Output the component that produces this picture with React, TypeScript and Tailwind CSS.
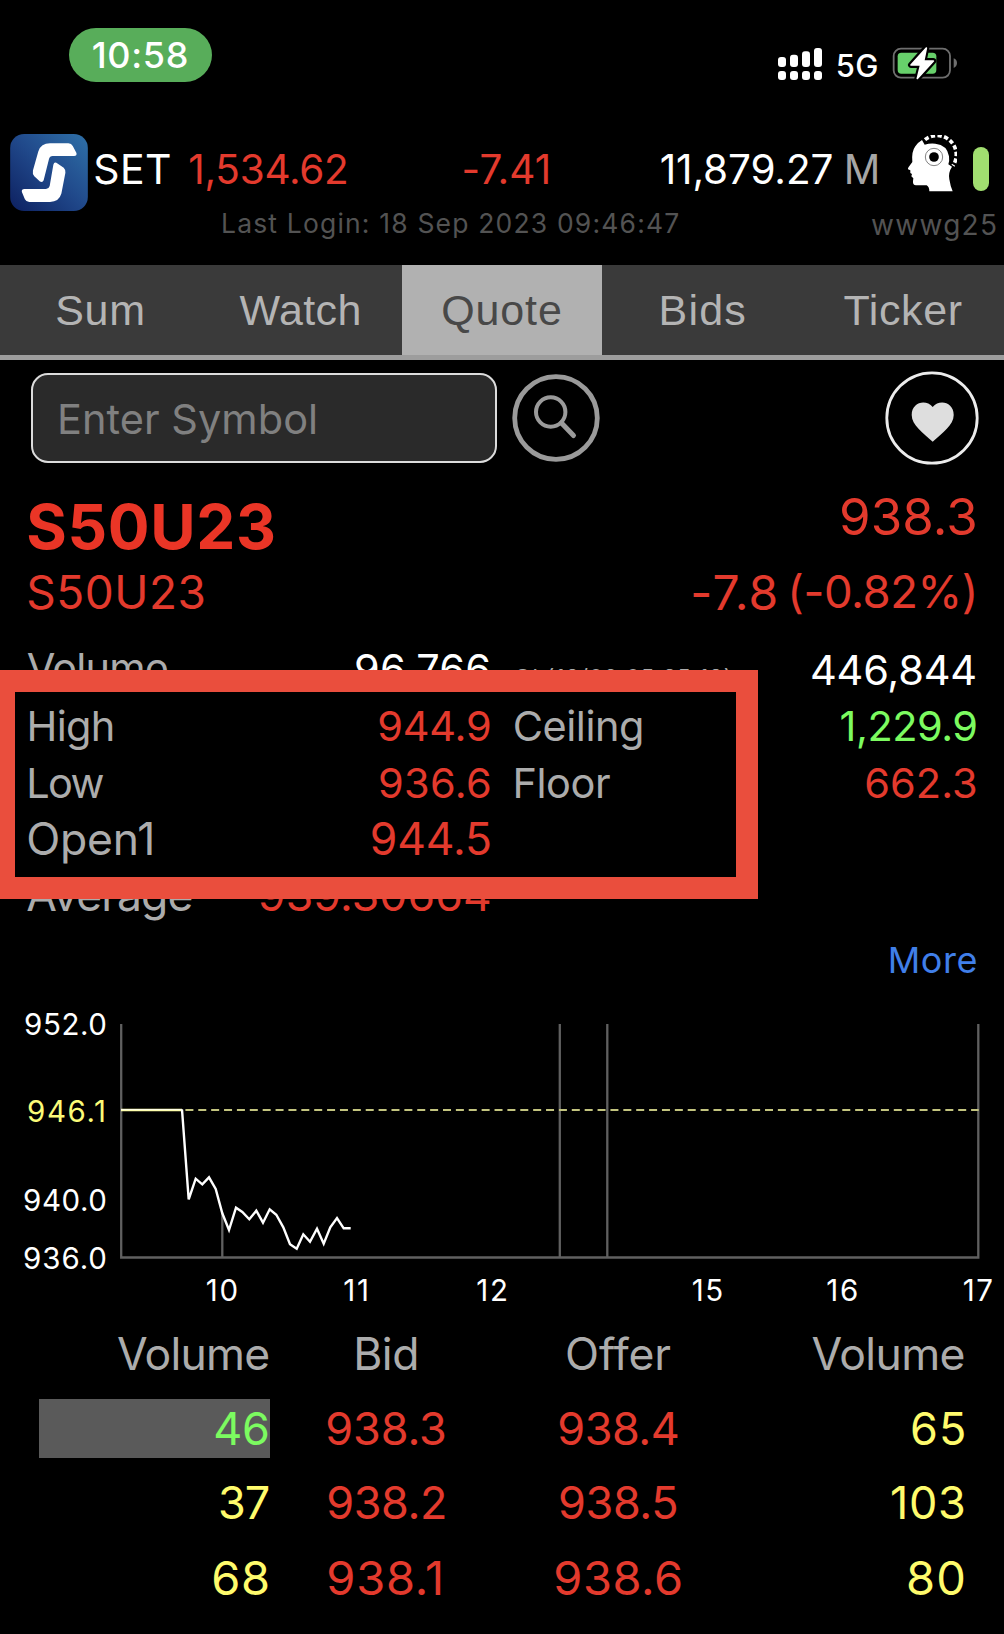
import React from "react";

const RED = "text-[#e33a2d]";
const GRAY = "text-[#acacac]";
const GREEN = "text-[#7cfb60]";
const YELLOW = "text-[#fffb6c]";

function T({ c, children }: { c: string; children: React.ReactNode }) {
  return <span className={`block shrink-0 whitespace-pre leading-none ${c}`}>{children}</span>;
}

function Signal() {
  return (
    <svg className="h-8 w-11" viewBox="829 144 132 96" fill="#fff">
      <rect x="829" y="171" width="24" height="30" rx="9" />
      <rect x="865" y="164" width="24" height="37" rx="9" />
      <rect x="901" y="154" width="24" height="47" rx="9" />
      <rect x="937" y="144" width="24" height="57" rx="9" />
      {[829, 865, 901, 937].map((x) => (
        <rect key={x} x={x} y="213" width="24" height="27" rx="9" />
      ))}
    </svg>
  );
}

function Battery() {
  return (
    <svg className="h-[34px] w-[66px]" viewBox="1170 139 198 102">
      <rect x="1175" y="147" width="169" height="87" rx="22" fill="none" stroke="#6e6e6e" strokeWidth="5.5" />
      <path d="M1355 176 Q1365 180 1365 190 T1355 205Z" fill="#6e6e6e" />
      <rect x="1187" y="159" width="116" height="63" rx="11" fill="#67d06b" />
      <path
        d="M1273 144 L1227 196 H1256 L1246 237 L1294 184 H1265Z"
        fill="#fff"
        stroke="#000"
        strokeWidth="18"
        strokeLinejoin="round"
        paintOrder="stroke"
      />
      <path d="M1273 145 L1227 196 H1256 L1246 236 L1294 184 H1265Z" fill="#fff" stroke="#fff" strokeWidth="5" strokeLinejoin="round" />
    </svg>
  );
}

function Logo() {
  return (
    <svg className="block h-[77px] w-[78px]" viewBox="31 402 232 230">
      <defs>
        <linearGradient id="logo" x1="0" y1="1" x2="1" y2="0">
          <stop offset="0" stopColor="#0d2060" />
          <stop offset="0.5" stopColor="#20488a" />
          <stop offset="1" stopColor="#2f71a8" />
        </linearGradient>
      </defs>
      <rect x="31" y="402" width="232" height="230" rx="42" fill="url(#logo)" />
      <g fill="#fff">
        <path d="M150 430H205Q214 430 218 438L229 459Q231 468 222 468H158Q149 468 147 477L131 540Q128 548 120 544L103 528Q97 521 99 511L115 454Q123 430 150 430Z" />
        <path d="M169 488L191 503Q197 509 196 518L184 580Q177 605 150 605H88Q79 605 75 597L66 575Q64 566 74 566H138Q147 565 149 557L160 494Q162 485 169 488Z" />
      </g>
    </svg>
  );
}

function HeadIcon() {
  return (
    <svg className="block h-[57px] w-[50px]" viewBox="1215 402 150 171">
      <path
        d="M1282 571Q1282 558 1274 553H1242Q1232 553 1233 541L1234 532L1228 526L1230 519L1225 516V508L1218 505Q1217 502 1220 498L1231 483Q1228 452 1240 436Q1248 424 1260 417L1268 431Q1284 426 1300 428Q1336 432 1341 466Q1343 482 1339 490L1350 497Q1338 515 1342 535Q1345 555 1352 571Z"
        fill="#fff"
      />
      <circle cx="1296" cy="468" r="26" fill="none" stroke="#6a6a6a" strokeWidth="2.5" />
      <circle cx="1296" cy="468" r="14.5" fill="#000" />
      <path d="M1269 416A58 58 0 0 1 1353 494" fill="none" stroke="#fff" strokeWidth="11" strokeDasharray="13 7" />
    </svg>
  );
}

const TABS = [
  { label: "Sum", c: "tracking-[0.7px]" },
  { label: "Watch", c: "tracking-[0.41px] ml-[-1px]" },
  { label: "Quote", c: "tracking-[0.87px]", active: true },
  { label: "Bids", c: "tracking-[1.18px]" },
  { label: "Ticker", c: "tracking-[0.63px] ml-[-1px]" },
];

const PRICE =
  "182,1109.5 188.7,1199.3 195.7,1178.7 202.3,1184.3 209,1177.3 215.7,1189 222.3,1213.3 229,1230 236,1207.7 242.3,1212 249.3,1219.3 256.3,1210.7 263,1222.7 269.7,1209.3 276.3,1214.7 283.3,1227.3 290,1244.3 296.7,1248.7 303.3,1234.3 310,1241.7 317,1228.7 323.7,1243.7 330.3,1227.3 337,1218 343.7,1228.3 350.7,1228.3";

const Y_LABELS = [
  { y: 1035, t: "952.0", c: "tracking-[0.6px]", x: 24, f: "#fff" },
  { y: 1121.5, t: "946.1", c: "tracking-[1.6px]", x: 27, f: "#fbfb78" },
  { y: 1210.5, t: "940.0", c: "tracking-[0.6px]", x: 23, f: "#fff" },
  { y: 1268.7, t: "936.0", c: "tracking-[0.95px]", x: 23, f: "#fff" },
];

const X_LABELS = [
  { x: 205.8, t: "10" },
  { x: 343.3, t: "11" },
  { x: 476.3, t: "12" },
  { x: 691.7, t: "15" },
  { x: 826.3, t: "16" },
  { x: 962.7, t: "17" },
];

function Chart() {
  return (
    <svg className="block h-[316px] w-[1004px]" viewBox="0 1000 1004 316">
      <g stroke="#606060" strokeWidth="2.3" fill="none">
        <path d="M121.2 1024V1257.5H978.3V1024" />
        <path d="M559.8 1024V1257M607.3 1024V1257M222.3 1213V1257" />
      </g>
      <path d="M121 1110H978.7" stroke="#c3c47f" strokeWidth="2" strokeDasharray="8 4.88" />
      <path d="M121 1110H182" stroke="#ffff9c" strokeWidth="2.6" />
      <path d="M121 1109.6H182.5" stroke="#ffffe6" strokeWidth="1.4" />
      <polyline points={PRICE} fill="none" stroke="#fff" strokeWidth="2.4" strokeLinejoin="miter" />
      <g fontSize="29.5">
        {Y_LABELS.map((l) => (
          <text key={l.t} x={l.x} y={l.y} fill={l.f} className={l.c}>
            {l.t}
          </text>
        ))}
        {X_LABELS.map((l) => (
          <text key={l.t} x={l.x} y="1300.7" fill="#fff" className="tracking-[1.6px]">
            {l.t}
          </text>
        ))}
      </g>
    </svg>
  );
}

const STATS = [
  {
    label: "Volume", lc: "text-[41.5px] tracking-[-0.87px] ml-[26.7px] mt-[-1px]",
    value: "96,766", vc: "text-white text-[41.5px] tracking-[0.26px] mr-[-0.3px]",
    label2: "OI (18/09 05:35:18)", l2c: "text-[22px] tracking-[1.05px] ml-[23.3px] mt-3.5",
    value2: "446,844", v2c: "text-white text-[41.5px] tracking-[-0.19px] mr-[27.1px] mt-[2px]",
  },
  {
    label: "High", lc: "text-[41.5px] tracking-[-0.68px] ml-[26.5px] mt-[2px]",
    value: "944.9", vc: `${RED} text-[41.5px] tracking-[-0.23px] mr-[-0.5px] mt-[2px]`,
    label2: "Ceiling", l2c: "text-[41.5px] tracking-[-0.48px] ml-[21.7px] mt-[2px]",
    value2: "1,229.9", v2c: `${GREEN} text-[41.5px] tracking-[-0.52px] mr-[26.5px] mt-[2px]`,
  },
  {
    label: "Low", lc: "text-[41.5px] tracking-[-1.7px] ml-[26.3px] mt-[2px]",
    value: "936.6", vc: `${RED} text-[41.5px] tracking-[0.35px] mr-[-1.1px] mt-[2px]`,
    label2: "Floor", l2c: "text-[41.5px] tracking-[-0.48px] ml-[21.5px] mt-[2px]",
    value2: "662.3", v2c: `${RED} text-[41.5px] tracking-[0.02px] mr-[26.3px] mt-[2px]`,
  },
  {
    label: "Open1", lc: "text-[44.5px] tracking-[-0.19px] ml-[26.2px]",
    value: "944.5", vc: `${RED} text-[44.5px] tracking-[-0.12px] mr-[-0.9px]`,
    label2: "", l2c: "", value2: "", v2c: "",
  },
  {
    label: "Average", lc: "text-[44.5px] tracking-[-0.92px] ml-[26.2px]",
    value: "939.30664", vc: `${RED} text-[44.5px] tracking-[0.13px] mr-[-0.9px]`,
    label2: "", l2c: "", value2: "", v2c: "",
  },
];

const BOOK = [
  {
    v: "46", vc: `${GREEN} tracking-[-0.37px] mr-[0.5px]`, hot: true,
    b: "938.3", bc: "tracking-[-0.15px] ml-[55.3px]",
    o: "938.4", oc: "tracking-[-0.52px] ml-[57.3px]",
    w: "65", wc: "tracking-[1.09px] mr-[36.5px]", size: "text-[45px]",
  },
  {
    v: "37", vc: `${YELLOW} tracking-[-1.1px] mr-[0.9px]`,
    b: "938.2", bc: "tracking-[-0.45px] ml-[56.3px]",
    o: "938.5", oc: "tracking-[-0.39px] ml-[58px]",
    w: "103", wc: "tracking-[0.7px] mr-[37.4px]", size: "text-[45px]",
  },
  {
    v: "68", vc: `${YELLOW} tracking-[0.55px] mr-[-0.6px]`,
    b: "938.1", bc: "tracking-[0.8px] ml-[56.2px]",
    o: "938.6", oc: "tracking-[0.54px] ml-[53.3px]",
    w: "80", wc: "tracking-[1.22px] mr-[36.8px]", size: "text-[47px]",
  },
];

export default function App() {
  return (
    <div className="flex h-[1634px] w-[1004px] flex-col overflow-hidden bg-black font-['Inter',sans-serif]">
      {/* Status bar */}
      <div className="flex h-[131px] shrink-0 items-start">
        <div className="ml-[69px] mt-7 flex h-[54px] w-[143px] items-center rounded-full bg-[#58ad5a]">
          <T c="ml-[22.7px] text-[36px] font-medium tracking-[0.66px] text-white">10:58</T>
        </div>
        <div className="ml-[566.3px] mt-12 flex h-8 items-center">
          <Signal />
          <T c="ml-[13.5px] mt-[2px] text-[31px] font-medium tracking-[0.4px] text-white">5G</T>
          <div className="ml-[12.8px] mt-[-2px]">
            <Battery />
          </div>
        </div>
      </div>

      {/* Index summary */}
      <div className="flex h-[76px] shrink-0 items-center">
        <div className="ml-[10.3px] mt-[6px] h-[77px]">
          <Logo />
        </div>
        <T c="ml-[5px] text-[41px] tracking-[0.38px] text-white">SET</T>
        <T c={`ml-[16.5px] mt-[2px] text-[40.5px] tracking-[-0.29px] ${RED}`}>1,534.62</T>
        <T c={`ml-[113px] mt-[2px] text-[40.5px] tracking-[0.17px] ${RED}`}>-7.41</T>
        <T c="ml-[108.3px] mt-[2px] text-[40.5px] tracking-[-0.13px] text-white">11,879.27</T>
        <T c="ml-[10.4px] mt-[2px] text-[40.5px] text-[#a6a6a6]">M</T>
        <div className="ml-[26.5px] mt-[-12px]">
          <HeadIcon />
        </div>
        <div className="ml-[16px] h-11 w-4 rounded-full bg-[#a1de70]" />
      </div>
      <div className="flex h-[58px] shrink-0 items-start justify-between pl-[221px] pr-[5.7px] pt-[3px] text-[#535353]">
        <T c="text-[26.5px] tracking-[1.17px]">Last Login: 18 Sep 2023 09:46:47</T>
        <T c="mt-px text-[28px] tracking-[1.3px]">wwwg25</T>
      </div>

      {/* Tabs */}
      <div className="grid h-[95px] shrink-0 grid-cols-5 border-b-[5px] border-[#9d9d9d] bg-[#3a3a3a] font-['Liberation_Sans',sans-serif] text-[43px]">
        {TABS.map((t) => (
          <div
            key={t.label}
            className={`flex items-center justify-center ${t.active ? "bg-[#b1b1b1] text-[#484848]" : "text-[#b4b4b4]"}`}
          >
            <T c={t.c}>{t.label}</T>
          </div>
        ))}
      </div>

      {/* Search */}
      <div className="flex h-[116px] shrink-0 items-center">
        <div className="ml-[31px] flex h-[90px] w-[466px] items-center rounded-[17px] border-2 border-[#dcdcdc] bg-[#2a2a2a]">
          <T c="ml-6 mt-1 text-[41.5px] tracking-[0.03px] text-[#808080]">Enter Symbol</T>
        </div>
        <svg className="ml-[15px] mt-[-1px] h-[88px] w-[88px]" viewBox="0 0 88 88" fill="none" stroke="#9a9a9a">
          <circle cx="44" cy="44" r="41.3" strokeWidth="4.8" />
          <circle cx="38.7" cy="38" r="14.7" strokeWidth="4" />
          <path d="M49.5 49L61.5 61.5" strokeWidth="5" strokeLinecap="round" />
        </svg>
        <svg className="ml-[285px] mt-[-1px] h-[94px] w-[94px]" viewBox="0 0 94 94">
          <circle cx="47" cy="47" r="45.2" fill="none" stroke="#ececec" strokeWidth="2.8" />
          <path
            d="M47.7 70.7C38 62 26.7 54 26.7 44C26.7 31 41 28 47.7 36C54.4 28 68.7 31 68.7 44C68.7 54 57.4 62 47.7 70.7Z"
            fill="#dedede"
          />
        </svg>
      </div>

      {/* Symbol and last price */}
      <div className="flex h-[165.5px] shrink-0 justify-between pl-[26.3px] pr-[26.2px]">
        <div>
          <T c="mt-[20px] text-[62px] font-bold tracking-[0.65px] text-[#ea3526]">S50U23</T>
          <T c={`mt-[11px] text-[46px] tracking-[0.5px] ${RED}`}>S50U23</T>
        </div>
        <div className="flex flex-col items-end">
          <T c={`mt-[15px] text-[51px] tracking-[0.11px] ${RED}`}>938.3</T>
          <div className={`mt-[27px] flex items-center ${RED}`}>
            <T c="text-[48px] tracking-[1.1px]">-7.8</T>
            <T c="ml-[8px] mt-[-2px] text-[45.5px] tracking-[-0.48px]">(-0.82%)</T>
          </div>
        </div>
      </div>

      {/* Statistics, with the highlighted block outlined on top */}
      <div className="relative h-[282px] shrink-0">
        {STATS.map((s) => (
          <div key={s.label} className="flex h-[56.4px] items-center">
            <div className="flex w-[491px] items-center justify-between">
              <T c={`${s.lc} ${GRAY}`}>{s.label}</T>
              <T c={s.vc}>{s.value}</T>
            </div>
            <div className="flex w-[513px] items-center justify-between">
              <T c={`${s.l2c} ${GRAY}`}>{s.label2}</T>
              <T c={s.v2c}>{s.value2}</T>
            </div>
          </div>
        ))}
        <div className="absolute left-[-7px] top-[28.5px] h-[229px] w-[765px] border-[22px] border-[#ea4e3d]" />
      </div>

      <div className="flex h-[76.5px] shrink-0 items-center justify-end pr-[26px]">
        <T c="mt-[-4px] text-[36px] tracking-[0.55px] text-[#407fe9]">More</T>
      </div>

      <Chart />

      {/* Order book */}
      <div className={`flex h-[75px] shrink-0 items-center pt-0.5 text-[44.5px] ${GRAY}`}>
        <div className="flex w-[270px] justify-end">
          <T c="tracking-[-0.76px] mr-[0.5px]">Volume</T>
        </div>
        <div className="flex w-[230px]">
          <T c="ml-[83.2px] tracking-[-0.45px]">Bid</T>
        </div>
        <div className="flex w-[250px]">
          <T c="ml-[65px] tracking-[-0.14px]">Offer</T>
        </div>
        <div className="flex w-[254px] justify-end">
          <T c="mr-[39.2px] tracking-[-0.64px]">Volume</T>
        </div>
      </div>
      {BOOK.map((r) => (
        <div key={r.b} className={`flex h-[74.6px] shrink-0 items-center ${r.size}`}>
          <div className={`ml-[39px] flex h-[59px] w-[231px] items-center justify-end ${r.hot ? "bg-[#5a5a5a]" : ""}`}>
            <T c={r.vc}>{r.v}</T>
          </div>
          <div className="flex w-[230px]">
            <T c={`${r.bc} ${RED}`}>{r.b}</T>
          </div>
          <div className="flex w-[250px]">
            <T c={`${r.oc} ${RED}`}>{r.o}</T>
          </div>
          <div className="flex w-[254px] justify-end">
            <T c={`${r.wc} ${YELLOW}`}>{r.w}</T>
          </div>
        </div>
      ))}
    </div>
  );
}
